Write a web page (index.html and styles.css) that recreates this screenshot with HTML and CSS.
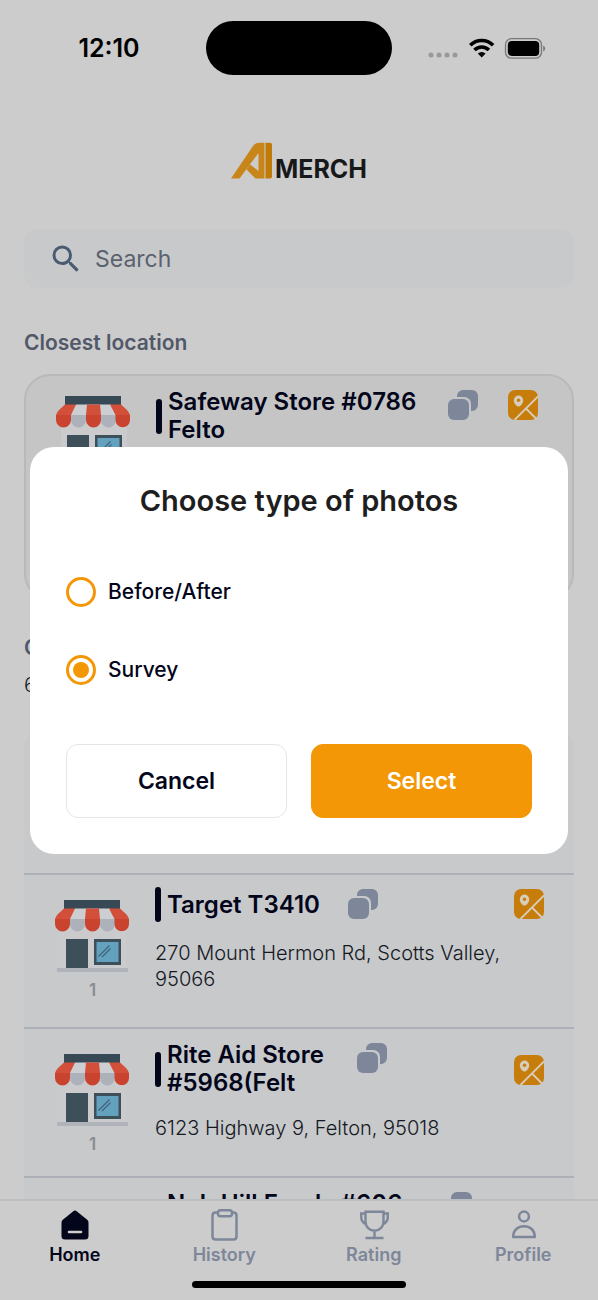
FILE: index.html
```html
<!DOCTYPE html>
<html lang="en">
<head>
<meta charset="utf-8">
<meta name="viewport" content="width=device-width, initial-scale=1">
<title>AI Merch</title>
<link rel="stylesheet" href="styles.css">
</head>
<body>
<svg class="defs" aria-hidden="true">
  <symbol id="store" viewBox="0 0 75 75">
    <path fill="#cbcbce" d="M5 20h66v49H5z"/>
    <path fill="#364955" d="M9 1h56v9H9z"/>
    <path fill="#cdced1" d="M20 9.500h35L60 20v5H15v-5z"/>
    <path fill="#adb1ba" d="M15 20h15v5a7.400 7.400 0 0 1-15 0zM45 20h15v5a7.400 7.400 0 0 1-15 0z"/>
    <path fill="#d24f3a" d="M9 9.500h11L15 20H0q1-3 3-5zM31 9.500h13L45 20H30zM54 9.500h11l6 5.500q2 2 3 5H59.500z"/>
    <path fill="#c9432f" d="M0 20h15v5a7.500 7.500 0 0 1-15 0zM30 20h15v5a7.500 7.500 0 0 1-15 0zM59.500 20h14.500v5a7.200 7.200 0 0 1-14.500 0z"/>
    <path fill="#3d4f58" d="M11 40h22v29H11zM39 40h27v26H39z"/>
    <path fill="#64a1bf" d="M41.500 43h22v20h-22z"/>
    <path stroke="#3d6379" stroke-width="1.200" d="M43.500 57.500L54.500 46.500M47 58L55.500 49.500"/>
    <path fill="#b0b3b9" d="M2 69h71v4H2z"/>
  </symbol>
  <symbol id="copy" viewBox="0 0 30 30">
    <path fill="#7d8799" d="M15 0h9a6 6 0 0 1 6 6v9a6 6 0 0 1-6 6h-1V13.500a6.500 6.500 0 0 0-6.500-6.500H9V6a6 6 0 0 1 6-6z"/>
    <rect y="9" width="21" height="21" rx="6" fill="#7d8799"/>
  </symbol>
  <symbol id="map" viewBox="0 0 30 30">
    <rect width="30" height="30" rx="7" fill="#c77d0b"/>
    <path fill="none" stroke="#d8cdbb" stroke-width="1.800" d="M30 6.500L6.500 30M18 18.500L28 28.500"/>
    <path fill="#d8cdbb" d="M10.500 5.500a4.700 4.700 0 0 1 4.700 4.700c0 3-2.500 6.300-4.700 6.300s-4.700-3.300-4.700-6.300a4.700 4.700 0 0 1 4.700-4.700z"/>
    <circle cx="10.500" cy="10.300" r="1.700" fill="#c77d0b"/>
  </symbol>
</svg>

<div class="app">
  <header class="status">
    <div class="time">12:10</div>
    <div class="island"></div>
    <svg class="signals" viewBox="0 0 118 24" aria-label="Wi-Fi and battery">
      <g fill="#999"><circle cx="3" cy="19" r="2.500"/><circle cx="11" cy="19" r="2.500"/><circle cx="19" cy="19" r="2.500"/><circle cx="27" cy="19" r="2.500"/></g>
      <g fill="none" stroke="#000" stroke-width="3.600"><path d="M42.300 9.300a16 16 0 0 1 22.800 0"/><path d="M46.500 14a10 10 0 0 1 14.400 0"/></g>
      <path d="M53.700 21.500l-3.900-4a5.600 5.600 0 0 1 7.800 0z"/>
      <rect x="77.500" y="2.700" width="36" height="19.500" rx="6" fill="none" stroke="#777" stroke-width="1.300"/>
      <rect x="79.800" y="5" width="31.400" height="15" rx="4"/>
      <path fill="#777" d="M115.200 9.500q2 1 2 3t-2 3z"/>
    </svg>
  </header>

  <main class="content">
    <h1 class="logo">
      <svg class="logo-mark" viewBox="0 0 41 37" role="img" aria-label="AI">
        <path fill="#c7851a" d="M0 36.500L22 4Q24.200 .8 28 .8H33.500V36.500H24.500L15.500 27.500L19 22.500L27.500 29V11L8.500 36.500z"/>
        <path fill="#c07a08" d="M34.500.8H39q2 0 2 2V34.500q0 2-2 2h-4.500z"/>
      </svg>
      <span>MERCH</span>
    </h1>

    <label class="search">
      <svg class="search-icon" viewBox="0 0 24 24" aria-hidden="true"><path fill="#4a5b70" d="M15.500 14h-.79l-.28-.27A6.471 6.471 0 0 0 16 9.500 6.500 6.500 0 1 0 9.500 16c1.610 0 3.090-.59 4.230-1.570l.27.280v.79l5 4.990L20.490 19l-4.990-5zm-6 0C7.010 14 5 11.990 5 9.500S7.010 5 9.500 5 14 7.010 14 9.500 11.990 14 9.500 14z"/></svg>
      <input type="text" placeholder="Search" aria-label="Search">
    </label>

    <h2 class="section-title">Closest location</h2>
    <article class="card">
      <div class="thumb"><svg class="store"><use href="#store"/></svg></div>
      <div class="head">
        <span class="bar"></span>
        <h3 class="name long">Safeway Store #0786 Felto</h3>
        <button class="icon-btn" aria-label="Copy"><svg><use href="#copy"/></svg></button>
        <button class="icon-btn map" aria-label="Map"><svg><use href="#map"/></svg></button>
      </div>
    </article>

    <h2 class="section-title others">Other</h2>
    <p class="count">6</p>

    <ul class="list">
      <li class="item blank"></li>
      <li class="item">
        <div class="thumb"><svg class="store"><use href="#store"/></svg><span>1</span></div>
        <div class="info">
          <div class="head">
            <span class="bar"></span>
            <h3 class="name">Target T3410</h3>
            <button class="icon-btn" aria-label="Copy"><svg><use href="#copy"/></svg></button>
            <button class="icon-btn map" aria-label="Map"><svg><use href="#map"/></svg></button>
          </div>
          <p class="address">270 Mount Hermon Rd, Scotts Valley, 95066</p>
        </div>
      </li>
      <li class="item">
        <div class="thumb"><svg class="store"><use href="#store"/></svg><span>1</span></div>
        <div class="info">
          <div class="head">
            <span class="bar"></span>
            <h3 class="name wrapped">Rite Aid Store<br>#5968(Felt</h3>
            <button class="icon-btn" aria-label="Copy"><svg><use href="#copy"/></svg></button>
            <button class="icon-btn map middle" aria-label="Map"><svg><use href="#map"/></svg></button>
          </div>
          <p class="address">6123 Highway 9, Felton, 95018</p>
        </div>
      </li>
      <li class="item">
        <div class="thumb"></div>
        <div class="info">
          <div class="head">
            <span class="bar low"></span>
            <h3 class="name long">Nob Hill Foods #606</h3>
            <button class="icon-btn" aria-label="Copy"><svg><use href="#copy"/></svg></button>
          </div>
        </div>
      </li>
    </ul>
  </main>

  <nav class="tabs">
    <div class="tab-row">
      <a class="tab active" href="#home">
        <svg viewBox="0 0 32 32"><path fill="#03051a" d="M16 1.500q1 0 2 1L28.500 11q1 1 1 2.500V27q0 3.500-3.500 3.500H6Q2.500 30.500 2.500 27V13.500q0-1.500 1-2.500L14 2.500q1-1 2-1z"/><path stroke="#ccc" stroke-width="2.600" stroke-linecap="round" d="M10 23h12"/></svg>
        Home
      </a>
      <a class="tab" href="#history">
        <svg viewBox="0 0 32 32"><g fill="none" stroke="#7d8799" stroke-width="2.500" stroke-linejoin="round"><path d="M10 3.500H7.500Q4.500 3.500 4.500 6.500v21q0 3 3 3h18q3 0 3-3v-21q0-3-3-3H24"/><rect x="10" y="1.300" width="14" height="6" rx="2.500"/></g></svg>
        History
      </a>
      <a class="tab" href="#rating">
        <svg viewBox="0 0 32 32"><g fill="none" stroke="#7d8799" stroke-width="2.400"><path d="M7.500 2.800h18v10a9 9 0 0 1-18 0zM16.500 22v7M7.500 29h18M7.500 4.500H3.200V8q0 5 5 7.500M25.500 4.500h4.300V8q0 5-5 7.500"/></g></svg>
        Rating
      </a>
      <a class="tab" href="#profile">
        <svg viewBox="0 0 32 32"><g fill="none" stroke="#7d8799" stroke-width="2.500" stroke-linejoin="round"><circle cx="17" cy="7.500" r="4.900"/><path d="M6.200 28C6.200 21 11 17.200 17 17.200S27.800 21 27.800 28z"/></g></svg>
        Profile
      </a>
    </div>
    <div class="home-indicator"></div>
  </nav>
</div>

<div class="overlay">
  <form class="modal" role="dialog" aria-labelledby="dialog-title">
    <h2 class="modal-title" id="dialog-title">Choose type of photos</h2>
    <label class="option"><input type="radio" name="type">Before/After</label>
    <label class="option"><input type="radio" name="type" checked>Survey</label>
    <div class="actions">
      <button type="button" class="btn">Cancel</button>
      <button type="button" class="btn primary">Select</button>
    </div>
  </form>
</div>
</body>
</html>
```
FILE: styles.css
```css
* {
  box-sizing: border-box;
}

body {
  margin: 0;
  background: #ccc;
  color: #03051a;
  font-family: Inter, "Liberation Sans", sans-serif;
}

h1, h2, h3, p, ul {
  margin: 0;
  padding: 0;
}

button {
  border: 0;
  padding: 0;
  background: none;
  font-family: inherit;
}

.defs {
  position: absolute;
  width: 0;
  height: 0;
}

.app {
  display: flex;
  flex-direction: column;
  height: 100vh;
  overflow: hidden;
}

/* Status bar */
.status {
  display: grid;
  grid-template-columns: 1fr 186px 1fr;
  align-items: center;
  flex: none;
  height: 96px;
}

.time {
  padding-left: 12px;
  color: #000;
  font-size: 25px;
  font-weight: 600;
  text-align: center;
}

.island {
  height: 54px;
  border-radius: 27px;
  background: #000;
}

.signals {
  width: 118px;
  height: 24px;
  margin-left: 36px;
}

/* Page content */
.content {
  flex: 1;
  min-height: 0;
  overflow: hidden;
  padding: 46px 24px 0;
}

.logo {
  display: flex;
  justify-content: center;
  align-items: flex-end;
  gap: 3px;
  height: 37px;
  color: #17181a;
  font-size: 25px;
  font-weight: 700;
  line-height: 20px;
}

.logo-mark {
  width: 41px;
  height: 37px;
}

.search {
  display: flex;
  align-items: center;
  gap: 11px;
  height: 59px;
  margin-top: 50px;
  padding: 0 24px;
  border-radius: 14px;
  background: #c7c9cb;
}

.search-icon {
  flex: none;
  width: 36px;
  height: 36px;
}

.search input {
  flex: 1;
  min-width: 0;
  border: 0;
  padding: 0;
  background: none;
  color: #5b626e;
  font: 400 23px/30px Inter, sans-serif;
}

.search input::placeholder {
  color: #5b626e;
  opacity: 1;
}

.section-title {
  margin-top: 41px;
  color: #535869;
  font-size: 21px;
  font-weight: 600;
  line-height: 28px;
}

.section-title.others {
  margin-top: 34px;
  color: #4a5b70;
}

.count {
  margin-top: 10px;
  color: #15181f;
  font-size: 20px;
  font-weight: 300;
  line-height: 26px;
}

.card {
  display: flex;
  align-items: flex-start;
  min-height: 226px;
  margin-top: 17px;
  padding: 12px 34px 12px 30px;
  border: 2px solid #b8b9ba;
  border-radius: 26px;
  background: #c5c5c5;
}

.card .thumb {
  padding-top: 7px;
}

.card .head {
  flex: 1;
}

.thumb {
  display: flex;
  flex-direction: column;
  align-items: center;
  flex: none;
  gap: 6px;
  width: 75px;
  margin-right: 25px;
  padding-top: 12px;
  color: #8a8c90;
  font-size: 17px;
  font-weight: 600;
  line-height: 20px;
}

.store {
  width: 75px;
  height: 75px;
}

.head {
  display: flex;
  align-items: flex-start;
}

.bar {
  align-self: center;
  flex: none;
  width: 6px;
  height: 35px;
  margin-right: 6px;
  border-radius: 3px;
  background: #03051a;
}

.bar.low {
  margin-top: 12px;
}

.name {
  align-self: center;
  margin-right: 28px;
  font-size: 24px;
  font-weight: 600;
  line-height: 28px;
}

.name.wrapped {
  margin-right: 33px;
}

.name.long {
  align-self: flex-start;
  flex: none;
  width: 252px;
}

.item .name.long {
  width: 247px;
}

.icon-btn {
  flex: none;
  width: 30px;
  height: 30px;
  margin-top: 2px;
}

.icon-btn svg {
  display: block;
  width: 30px;
  height: 30px;
}

.icon-btn.map {
  margin-left: auto;
}

.icon-btn.middle {
  align-self: center;
}

.list {
  margin-top: 35px;
  border-radius: 14px 14px 0 0;
  background: #c7c9cb;
  list-style: none;
}

.item {
  display: flex;
  padding: 12px 30px 0 31px;
  border-bottom: 2px solid #adb0b7;
}

.item.blank {
  min-height: 142px;
}

.info {
  flex: 1;
  min-width: 0;
  padding-bottom: 35px;
}

.address {
  margin-top: 18px;
  color: #15181f;
  font-size: 20px;
  font-weight: 300;
  line-height: 26px;
}

/* Bottom tabs */
.tabs {
  flex: none;
  padding: 8px 0 12px;
  border-top: 2px solid #bbbec1;
  background: #ccc;
}

.tab-row {
  display: grid;
  grid-template-columns: repeat(4, 1fr);
}

.tab {
  display: flex;
  flex-direction: column;
  align-items: center;
  gap: 3px;
  color: #7d8799;
  font-size: 18px;
  font-weight: 600;
  line-height: 22px;
  text-decoration: none;
}

.tab.active {
  color: #03051a;
}

.tab svg {
  width: 32px;
  height: 32px;
}

.home-indicator {
  width: 214px;
  height: 7px;
  margin: 15px auto 0;
  border-radius: 4px;
  background: #000;
}

/* Dialog */
.overlay {
  position: fixed;
  inset: 0;
  display: flex;
  align-items: center;
  padding: 0 30px;
}

.modal {
  flex: 1;
  padding: 36px;
  border-radius: 24px;
  background: #fff;
}

.modal-title {
  margin-bottom: 58px;
  color: #1e1e20;
  font-size: 29px;
  font-weight: 600;
  line-height: 36px;
  text-align: center;
}

.option {
  display: flex;
  align-items: center;
  gap: 12px;
  height: 30px;
  margin-bottom: 48px;
  font-size: 21px;
  font-weight: 500;
}

.option input {
  display: grid;
  place-items: center;
  appearance: none;
  width: 30px;
  height: 30px;
  margin: 0;
  border: 3px solid #f39706;
  border-radius: 50%;
}

.option input:checked::before {
  content: "";
  width: 16px;
  height: 16px;
  border-radius: 50%;
  background: #f39706;
}

.actions {
  display: grid;
  grid-template-columns: 1fr 1fr;
  gap: 24px;
  padding-top: 11px;
}

.btn {
  height: 74px;
  border: 1px solid #e3e6e9;
  border-radius: 12px;
  color: #03051a;
  font-size: 23px;
  font-weight: 600;
}

.btn.primary {
  border-color: #f39706;
  background: #f39706;
  color: #fff;
}
```
